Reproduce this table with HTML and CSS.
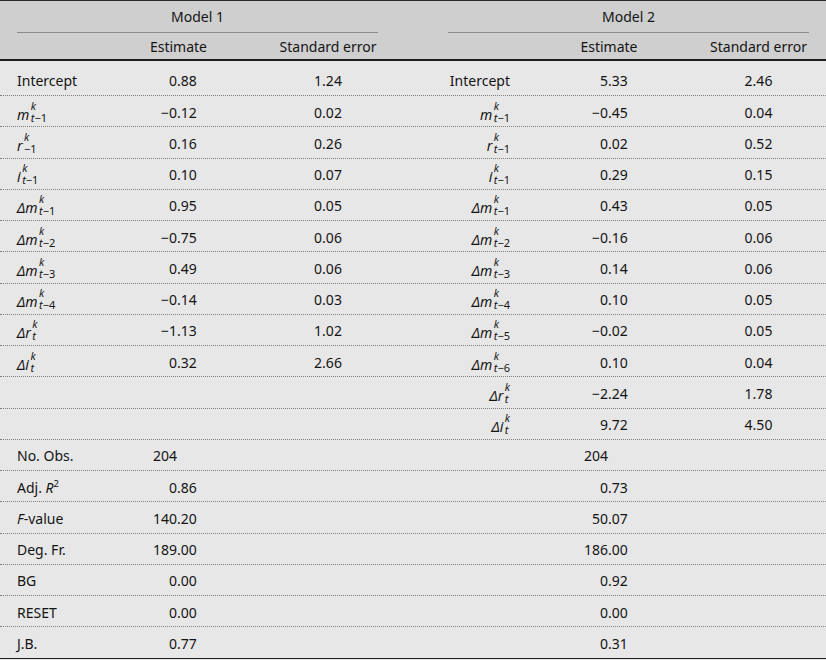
FILE: index.html
```html
<!DOCTYPE html>
<html lang="en">
<head>
<meta charset="utf-8">
<title>Regression results</title>
<link rel="stylesheet" href="styles.css">
</head>
<body>
<div class="table">
  <div class="head">
    <div class="row h1">
      <div class="group g1">Model 1</div>
      <div class="group g2">Model 2</div>
    </div>
    <div class="row h2">
      <div></div>
      <div class="ctr">Estimate</div>
      <div class="ctr">Standard error</div>
      <div></div>
      <div class="ctr">Estimate</div>
      <div class="ctr">Standard error</div>
    </div>
  </div>
  <div class="body">
    <div class="row first">
      <div class="lab">Intercept</div>
      <div class="num"><span class="i">0</span><span class="f">.88</span></div>
      <div class="ctr">1.24</div>
      <div class="lab r">Intercept</div>
      <div class="num"><span class="i">5</span><span class="f">.33</span></div>
      <div class="ctr">2.46</div>
    </div>
    <div class="row">
      <div class="lab"><i>m</i><span class="ss"><i class="sp">k</i><span class="sb"><i>t</i>−1</span></span></div>
      <div class="num"><span class="i">−0</span><span class="f">.12</span></div>
      <div class="ctr">0.02</div>
      <div class="lab r"><i>m</i><span class="ss"><i class="sp">k</i><span class="sb"><i>t</i>−1</span></span></div>
      <div class="num"><span class="i">−0</span><span class="f">.45</span></div>
      <div class="ctr">0.04</div>
    </div>
    <div class="row">
      <div class="lab"><i>r</i><span class="ss"><i class="sp">k</i><span class="sb">−1</span></span></div>
      <div class="num"><span class="i">0</span><span class="f">.16</span></div>
      <div class="ctr">0.26</div>
      <div class="lab r"><i>r</i><span class="ss"><i class="sp">k</i><span class="sb"><i>t</i>−1</span></span></div>
      <div class="num"><span class="i">0</span><span class="f">.02</span></div>
      <div class="ctr">0.52</div>
    </div>
    <div class="row">
      <div class="lab"><i>i</i><span class="ss"><i class="sp">k</i><span class="sb"><i>t</i>−1</span></span></div>
      <div class="num"><span class="i">0</span><span class="f">.10</span></div>
      <div class="ctr">0.07</div>
      <div class="lab r"><i>i</i><span class="ss"><i class="sp">k</i><span class="sb"><i>t</i>−1</span></span></div>
      <div class="num"><span class="i">0</span><span class="f">.29</span></div>
      <div class="ctr">0.15</div>
    </div>
    <div class="row">
      <div class="lab"><i>Δm</i><span class="ss"><i class="sp">k</i><span class="sb"><i>t</i>−1</span></span></div>
      <div class="num"><span class="i">0</span><span class="f">.95</span></div>
      <div class="ctr">0.05</div>
      <div class="lab r"><i>Δm</i><span class="ss"><i class="sp">k</i><span class="sb"><i>t</i>−1</span></span></div>
      <div class="num"><span class="i">0</span><span class="f">.43</span></div>
      <div class="ctr">0.05</div>
    </div>
    <div class="row">
      <div class="lab"><i>Δm</i><span class="ss"><i class="sp">k</i><span class="sb"><i>t</i>−2</span></span></div>
      <div class="num"><span class="i">−0</span><span class="f">.75</span></div>
      <div class="ctr">0.06</div>
      <div class="lab r"><i>Δm</i><span class="ss"><i class="sp">k</i><span class="sb"><i>t</i>−2</span></span></div>
      <div class="num"><span class="i">−0</span><span class="f">.16</span></div>
      <div class="ctr">0.06</div>
    </div>
    <div class="row">
      <div class="lab"><i>Δm</i><span class="ss"><i class="sp">k</i><span class="sb"><i>t</i>−3</span></span></div>
      <div class="num"><span class="i">0</span><span class="f">.49</span></div>
      <div class="ctr">0.06</div>
      <div class="lab r"><i>Δm</i><span class="ss"><i class="sp">k</i><span class="sb"><i>t</i>−3</span></span></div>
      <div class="num"><span class="i">0</span><span class="f">.14</span></div>
      <div class="ctr">0.06</div>
    </div>
    <div class="row">
      <div class="lab"><i>Δm</i><span class="ss"><i class="sp">k</i><span class="sb"><i>t</i>−4</span></span></div>
      <div class="num"><span class="i">−0</span><span class="f">.14</span></div>
      <div class="ctr">0.03</div>
      <div class="lab r"><i>Δm</i><span class="ss"><i class="sp">k</i><span class="sb"><i>t</i>−4</span></span></div>
      <div class="num"><span class="i">0</span><span class="f">.10</span></div>
      <div class="ctr">0.05</div>
    </div>
    <div class="row">
      <div class="lab"><i>Δr</i><span class="ss"><i class="sp">k</i><span class="sb"><i>t</i></span></span></div>
      <div class="num"><span class="i">−1</span><span class="f">.13</span></div>
      <div class="ctr">1.02</div>
      <div class="lab r"><i>Δm</i><span class="ss"><i class="sp">k</i><span class="sb"><i>t</i>−5</span></span></div>
      <div class="num"><span class="i">−0</span><span class="f">.02</span></div>
      <div class="ctr">0.05</div>
    </div>
    <div class="row">
      <div class="lab"><i>Δi</i><span class="ss"><i class="sp">k</i><span class="sb"><i>t</i></span></span></div>
      <div class="num"><span class="i">0</span><span class="f">.32</span></div>
      <div class="ctr">2.66</div>
      <div class="lab r"><i>Δm</i><span class="ss"><i class="sp">k</i><span class="sb"><i>t</i>−6</span></span></div>
      <div class="num"><span class="i">0</span><span class="f">.10</span></div>
      <div class="ctr">0.04</div>
    </div>
    <div class="row">
      <div></div><div></div><div></div>
      <div class="lab r"><i>Δr</i><span class="ss"><i class="sp">k</i><span class="sb"><i>t</i></span></span></div>
      <div class="num"><span class="i">−2</span><span class="f">.24</span></div>
      <div class="ctr">1.78</div>
    </div>
    <div class="row">
      <div></div><div></div><div></div>
      <div class="lab r"><i>Δi</i><span class="ss"><i class="sp">k</i><span class="sb"><i>t</i></span></span></div>
      <div class="num"><span class="i">9</span><span class="f">.72</span></div>
      <div class="ctr">4.50</div>
    </div>
    <div class="row">
      <div class="lab">No. Obs.</div>
      <div class="num"><span class="i">204</span><span class="f"></span></div>
      <div></div><div></div>
      <div class="num"><span class="i">204</span><span class="f"></span></div>
      <div></div>
    </div>
    <div class="row">
      <div class="lab">Adj. <i>R</i><sup class="pw">2</sup></div>
      <div class="num"><span class="i">0</span><span class="f">.86</span></div>
      <div></div><div></div>
      <div class="num"><span class="i">0</span><span class="f">.73</span></div>
      <div></div>
    </div>
    <div class="row">
      <div class="lab"><i>F</i>-value</div>
      <div class="num"><span class="i">140</span><span class="f">.20</span></div>
      <div></div><div></div>
      <div class="num"><span class="i">50</span><span class="f">.07</span></div>
      <div></div>
    </div>
    <div class="row">
      <div class="lab">Deg. Fr.</div>
      <div class="num"><span class="i">189</span><span class="f">.00</span></div>
      <div></div><div></div>
      <div class="num"><span class="i">186</span><span class="f">.00</span></div>
      <div></div>
    </div>
    <div class="row">
      <div class="lab">BG</div>
      <div class="num"><span class="i">0</span><span class="f">.00</span></div>
      <div></div><div></div>
      <div class="num"><span class="i">0</span><span class="f">.92</span></div>
      <div></div>
    </div>
    <div class="row">
      <div class="lab">RESET</div>
      <div class="num"><span class="i">0</span><span class="f">.00</span></div>
      <div></div><div></div>
      <div class="num"><span class="i">0</span><span class="f">.00</span></div>
      <div></div>
    </div>
    <div class="row last">
      <div class="lab">J.B.</div>
      <div class="num"><span class="i">0</span><span class="f">.77</span></div>
      <div></div><div></div>
      <div class="num"><span class="i">0</span><span class="f">.31</span></div>
      <div></div>
    </div>
  </div>
</div>
</body>
</html>
```
FILE: styles.css
```css
html, body {
  margin: 0;
  padding: 0;
  background: #e7e7e7;
}
body {
  font-family: "Noto Sans", "Open Sans", sans-serif;
  font-size: 14px;
  color: #141414;
  width: 826px;
  height: 660px;
  overflow: hidden;
}
.table {
  width: 826px;
  border-top: 1px solid #2a2a2a;
}
.head {
  background: #cfcfcf;
  border-bottom: 2px solid #1e1e1e;
}
.row {
  display: grid;
  grid-template-columns: 62px 59px 100px 62px 58px 101px;
  column-gap: 70px;
  padding: 0 17px;
  box-sizing: border-box;
  align-items: center;
  white-space: nowrap;
}
.h1 {
  height: 32px;
  align-items: stretch;
}
.group {
  grid-column: span 3;
  text-align: center;
  border-bottom: 1px solid #8c8c8c;
  line-height: 31px;
}
.h2 {
  height: 26px;
}
.ctr {
  text-align: center;
}
.body .row {
  height: 31.25px;
  padding-top: 2px;
  border-bottom: 1px dotted #7e7e7e;
}
.body .row.first {
  height: 35px;
  padding-top: 5px;
}
.body .row.last {
  border-bottom: 1px solid #1e1e1e;
  height: 32px;
}
.lab.r {
  text-align: right;
}
.num {
  display: grid;
  grid-template-columns: 28px auto;
}
.num .i {
  text-align: right;
}
.num .f {
  text-align: left;
}
.ss {
  display: inline-flex;
  flex-direction: column;
  vertical-align: 10px;
  margin-left: 1.5px;
  text-align: left;
}
.sp {
  font-size: 10.5px;
  line-height: 10px;
}
.sb {
  font-size: 11px;
  line-height: 10px;
  margin-top: 2px;
}
.pw {
  font-size: 9.5px;
  vertical-align: 6px;
  line-height: 0;
}
```
